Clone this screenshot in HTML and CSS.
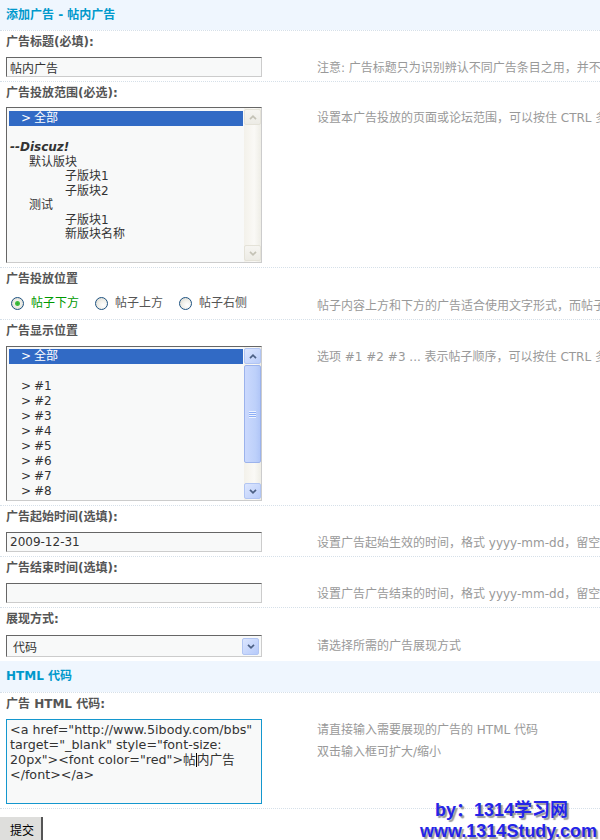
FILE: index.html
```html
<!DOCTYPE html>
<html lang="zh-CN">
<head>
    <meta charset="UTF-8">
    <meta name="viewport" content="width=device-width, initial-scale=1.0">
    <title>添加广告 - 帖内广告</title>
    <link rel="stylesheet" href="styles.css">
</head>
<body>
    <div class="partition">添加广告 - 帖内广告</div>

    <!-- 标题 -->
    <div class="group">
        <div class="label">广告标题(必填):</div>
        <div class="row">
            <div class="field"><input type="text" class="txt" value="帖内广告"></div>
            <div class="tip">注意: 广告标题只为识别辨认不同广告条目之用，并不在广告中显示</div>
        </div>
    </div>

    <!-- 投放范围 -->
    <div class="group">
        <div class="label">广告投放范围(必选):</div>
        <div class="row row-list">
            <div class="field">
                <div class="listbox list-forums">
                    <div class="options">
                        <div class="option selected"><span class="gt">&gt;</span>全部</div>
                        <div class="option"></div>
                        <div class="option forum-root">--Discuz!</div>
                        <div class="option lv1">默认版块</div>
                        <div class="option lv2">子版块1</div>
                        <div class="option lv2">子版块2</div>
                        <div class="option lv1">测试</div>
                        <div class="option lv2">子版块1</div>
                        <div class="option lv2">新版块名称</div>
                    </div>
                    <div class="scrollbar">
                        <div class="sb-btn"><svg width="8" height="5" viewBox="0 0 8 5"><path d="M1 4.2 L4 1.2 L7 4.2" fill="none" stroke="currentColor" stroke-width="1.7"/></svg></div>
                        <div class="sb-track"></div>
                        <div class="sb-btn"><svg width="8" height="5" viewBox="0 0 8 5"><path d="M1 0.8 L4 3.8 L7 0.8" fill="none" stroke="currentColor" stroke-width="1.7"/></svg></div>
                    </div>
                </div>
            </div>
            <div class="tip">设置本广告投放的页面或论坛范围，可以按住 CTRL 多选，选择“全部”为不限制范围</div>
        </div>
    </div>

    <!-- 投放位置 -->
    <div class="group">
        <div class="label">广告投放位置</div>
        <div class="row row-radio">
            <div class="field radios">
                <label class="radio checked"><span class="dot"></span>帖子下方</label>
                <label class="radio"><span class="dot"></span>帖子上方</label>
                <label class="radio"><span class="dot"></span>帖子右侧</label>
            </div>
            <div class="tip">帖子内容上方和下方的广告适合使用文字形式，而帖子右侧适合使用图片形式</div>
        </div>
    </div>

    <!-- 显示位置 -->
    <div class="group">
        <div class="label">广告显示位置</div>
        <div class="row">
            <div class="field">
                <div class="listbox list-floors">
                    <div class="options">
                        <div class="option selected"><span class="gt">&gt;</span>全部</div>
                        <div class="option"></div>
                        <div class="option"><span class="gt">&gt;</span>#1</div>
                        <div class="option"><span class="gt">&gt;</span>#2</div>
                        <div class="option"><span class="gt">&gt;</span>#3</div>
                        <div class="option"><span class="gt">&gt;</span>#4</div>
                        <div class="option"><span class="gt">&gt;</span>#5</div>
                        <div class="option"><span class="gt">&gt;</span>#6</div>
                        <div class="option"><span class="gt">&gt;</span>#7</div>
                        <div class="option"><span class="gt">&gt;</span>#8</div>
                    </div>
                    <div class="scrollbar active">
                        <div class="sb-btn"><svg width="8" height="5" viewBox="0 0 8 5"><path d="M1 4.2 L4 1.2 L7 4.2" fill="none" stroke="currentColor" stroke-width="1.7"/></svg></div>
                        <div class="sb-track">
                            <div class="sb-thumb"><span class="grip"></span></div>
                        </div>
                        <div class="sb-btn"><svg width="8" height="5" viewBox="0 0 8 5"><path d="M1 0.8 L4 3.8 L7 0.8" fill="none" stroke="currentColor" stroke-width="1.7"/></svg></div>
                    </div>
                </div>
            </div>
            <div class="tip">选项 #1 #2 #3 ... 表示帖子顺序，可以按住 CTRL 多选，选择“全部”为不限制显示位置</div>
        </div>
    </div>

    <!-- 起始时间 -->
    <div class="group">
        <div class="label">广告起始时间(选填):</div>
        <div class="row">
            <div class="field"><input type="text" class="txt" value="2009-12-31"></div>
            <div class="tip">设置广告起始生效的时间，格式 yyyy-mm-dd，留空为不限制起始时间</div>
        </div>
    </div>

    <!-- 结束时间 -->
    <div class="group">
        <div class="label">广告结束时间(选填):</div>
        <div class="row">
            <div class="field"><input type="text" class="txt" value=""></div>
            <div class="tip">设置广告广告结束的时间，格式 yyyy-mm-dd，留空为不限制结束时间</div>
        </div>
    </div>

    <!-- 展现方式 -->
    <div class="group">
        <div class="label">展现方式:</div>
        <div class="row row-select">
            <div class="field">
                <div class="select">
                    <span>代码</span>
                    <span class="drop"><svg width="8" height="5" viewBox="0 0 8 5"><path d="M1 0.8 L4 3.8 L7 0.8" fill="none" stroke="currentColor" stroke-width="1.7"/></svg></span>
                </div>
            </div>
            <div class="tip">请选择所需的广告展现方式</div>
        </div>
    </div>

    <div class="partition partition-sub">HTML 代码</div>

    <div class="group">
        <div class="label">广告 HTML 代码:</div>
        <div class="row">
            <div class="field">
<div class="code">&lt;a href="http://www.5ibody.com/bbs"
target="_blank" style="font-size:
20px"&gt;&lt;font color="red"&gt;帖<span class="caret"></span>内广告
&lt;/font&gt;&lt;/a&gt;</div>
            </div>
            <div class="tip">请直接输入需要展现的广告的 HTML 代码<br>双击输入框可扩大/缩小</div>
        </div>
    </div>

    <div class="group buttons">
        <button class="btn" type="button">提交</button>
    </div>

    <div class="watermark">
        <div class="by">by：1314学习网</div>
        <div>www.1314Study.com</div>
    </div>
</body>
</html>
```

FILE: styles.css
```css
body {
    margin: 0;
    font-family: "DejaVu Sans", "Noto Sans CJK SC", sans-serif;
    font-size: 12px;
    color: #333;
    background-color: #fff;
    overflow: hidden;
}
.partition {
    height: 30px;
    line-height: 30px;
    padding-left: 6px;
    background-color: #EFF6FE;
    color: #0099CC;
    font-weight: bold;
}
.partition-sub {
    height: 31px;
    line-height: 31px;
}
.group {
    border-top: 1px dotted #D6E0E9;
}
.label {
    height: 22px;
    line-height: 22px;
    padding-left: 6px;
    font-weight: bold;
    color: #555;
}
.row {
    display: flex;
    align-items: flex-start;
    padding: 4px 0;
}
.row-list {
    padding-top: 3px;
}
.row-select {
    padding-top: 5px;
}
.row-radio {
    padding: 1px 0 4px;
}
.field {
    width: 317px;
    flex-shrink: 0;
    padding-left: 6px;
    box-sizing: border-box;
}
.tip {
    color: #999;
    line-height: 22px;
    margin-bottom: -2px;
    white-space: nowrap;
}
.row-radio .tip {
    padding-top: 4px;
}

/* text inputs */
.txt {
    display: block;
    width: 256px;
    height: 20px;
    margin: 0;
    padding: 0 3px;
    box-sizing: border-box;
    border: 1px solid;
    border-color: #666 #ccc #ccc #666;
    background-color: #F8F9F9;
    color: #333;
    font: inherit;
    outline: none;
}

/* list boxes */
.listbox {
    display: flex;
    width: 256px;
    box-sizing: border-box;
    border: 1px solid;
    border-color: #666 #ccc #ccc #666;
    background-color: #F8F9F9;
}
.list-forums {
    height: 156px;
}
.list-floors {
    height: 155px;
}
.listbox .options {
    flex: 1;
    padding: 3px 1px 0 2px;
    overflow: hidden;
}
.list-floors .options {
    padding-top: 2px;
}
.option {
    height: 14.5px;
    line-height: 14.5px;
    padding-left: 1px;
    white-space: nowrap;
    color: #333;
}
.list-floors .option {
    height: 15px;
    line-height: 15px;
}
.option .gt {
    display: inline-block;
    width: 13px;
}
.option.selected {
    padding-left: 12px;
    background-color: #316AC5;
    color: #fff;
}
.list-floors .option {
    padding-left: 12px;
}
.forum-root {
    font-weight: bold;
    font-style: italic;
}
.lv1 {
    padding-left: 20px;
}
.lv2 {
    padding-left: 56px;
}

/* scrollbars */
.scrollbar {
    width: 17px;
    flex-shrink: 0;
    display: flex;
    flex-direction: column;
    padding: 1px 0;
    box-sizing: border-box;
    background: linear-gradient(90deg, #F3F1EA, #FAF9F6 60%, #EEEDE6);
}
.sb-btn {
    height: 16px;
    box-sizing: border-box;
    border: 1px solid #E4E2D8;
    border-radius: 2px;
    background: linear-gradient(#F6F5F1, #ECEBE5);
    color: #C4C2B6;
    display: flex;
    align-items: center;
    justify-content: center;
}
.sb-track {
    flex: 1;
}
.scrollbar.active .sb-btn {
    border-color: #B1C5F3;
    background: linear-gradient(135deg, #DCE6FE, #BACDFA);
    color: #4D6185;
}
.sb-thumb {
    height: 98px;
    margin-top: 1px;
    box-sizing: border-box;
    border: 1px solid #9CB3EC;
    border-radius: 2px;
    background: linear-gradient(90deg, #CBD9FD, #BDD0FA 70%, #B1C6F7);
    display: flex;
    align-items: center;
    justify-content: center;
}
.grip {
    width: 7px;
    height: 7px;
    background: repeating-linear-gradient(#EEF3FE 0 1px, #8DAEF5 1px 2px);
}

/* radios */
.radios {
    display: flex;
    gap: 16px;
    padding-left: 11px;
    line-height: 24px;
}
.radio {
    display: flex;
    align-items: center;
    gap: 7px;
    color: #555;
}
.radio.checked {
    color: #009900;
}
.dot {
    width: 13px;
    height: 13px;
    box-sizing: border-box;
    border: 1px solid #1C5180;
    border-radius: 50%;
    background: radial-gradient(circle at 65% 65%, #fff 0, #F1F0EA 45%, #D4D3CB 100%);
}
.radio.checked .dot {
    background: radial-gradient(circle, #2FA82F 0, #44C044 2px, #F1F0EA 3px, #D4D3CB 100%);
}

/* dropdown */
.select {
    width: 256px;
    height: 22px;
    box-sizing: border-box;
    border: 1px solid;
    border-color: #666 #ccc #ccc #666;
    background-color: #F8F9F9;
    display: flex;
    align-items: center;
    justify-content: space-between;
    padding: 0 2px 0 6px;
    color: #333;
}
.drop {
    width: 17px;
    height: 17px;
    box-sizing: border-box;
    border: 1px solid #B1C5F3;
    border-radius: 2px;
    background: linear-gradient(135deg, #DCE6FE, #B6CAFA);
    color: #4D6185;
    display: flex;
    align-items: center;
    justify-content: center;
}

/* code box */
.code {
    width: 256px;
    height: 85px;
    box-sizing: border-box;
    border: 1px solid #1497CE;
    background-color: #F8F9F9;
    padding: 2px 3px;
    font-size: 12.7px;
    line-height: 15px;
    white-space: pre;
    overflow: hidden;
    color: #333;
}
.caret {
    display: inline-block;
    width: 1px;
    height: 14px;
    background-color: #000;
    vertical-align: -3px;
}

/* submit */
.buttons {
    padding-top: 8px;
}
.btn {
    display: block;
    margin: 0;
    height: 24px;
    padding: 0 7px 0 10px;
    border: none;
    border-right: 2px solid #555;
    background-color: #DEDEDC;
    color: #000;
    font: inherit;
    cursor: pointer;
}

.watermark {
    position: absolute;
    left: 420px;
    top: 800px;
    font-family: "Liberation Sans", "Noto Sans CJK SC", sans-serif;
    font-size: 18px;
    font-weight: bold;
    line-height: 21px;
    color: #2424E8;
    text-shadow: 2px 2px 1px #9A9A9A;
    white-space: nowrap;
}
.watermark .by {
    padding-left: 15px;
}
```
